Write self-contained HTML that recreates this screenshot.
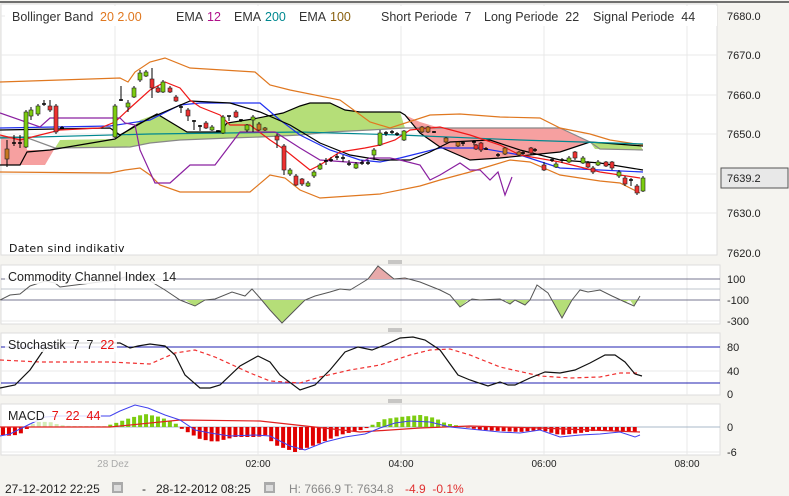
<!DOCTYPE html>
<html><head><meta charset="utf-8"><style>
html,body{margin:0;padding:0;background:#f5f4f0;}
svg{display:block;font-family:"Liberation Sans",sans-serif;}
</style></head><body>
<svg id="s" width="789" height="496" viewBox="0 0 789 496" xmlns="http://www.w3.org/2000/svg">
<rect width="789" height="496" fill="#f5f4f0"/>
<line x1="0" y1="2" x2="789" y2="2" stroke="#444" stroke-width="1.5"/>
<rect x="1" y="4" width="716" height="251" fill="#fff" stroke="#ddd"/>
<rect x="1" y="265" width="719" height="59" fill="#fff" stroke="#ddd"/>
<rect x="1" y="333" width="719" height="62" fill="#fff" stroke="#ddd"/>
<rect x="1" y="404" width="719" height="51" fill="#fff" stroke="#ddd"/>
<g stroke="#e8e8e8" stroke-width="1">
<line x1="115" y1="4" x2="115" y2="255"/><line x1="258" y1="4" x2="258" y2="255"/><line x1="401" y1="4" x2="401" y2="255"/><line x1="544" y1="4" x2="544" y2="255"/><line x1="687" y1="4" x2="687" y2="255"/>
<line x1="1" y1="16" x2="717" y2="16"/><line x1="1" y1="55" x2="717" y2="55"/><line x1="1" y1="95" x2="717" y2="95"/><line x1="1" y1="134" x2="717" y2="134"/><line x1="1" y1="174" x2="717" y2="174"/><line x1="1" y1="213" x2="717" y2="213"/>
<line x1="115" y1="265" x2="115" y2="324"/><line x1="258" y1="265" x2="258" y2="324"/><line x1="401" y1="265" x2="401" y2="324"/><line x1="544" y1="265" x2="544" y2="324"/><line x1="687" y1="265" x2="687" y2="324"/>
<line x1="115" y1="333" x2="115" y2="395"/><line x1="258" y1="333" x2="258" y2="395"/><line x1="401" y1="333" x2="401" y2="395"/><line x1="544" y1="333" x2="544" y2="395"/><line x1="687" y1="333" x2="687" y2="395"/>
<line x1="115" y1="404" x2="115" y2="455"/><line x1="258" y1="404" x2="258" y2="455"/><line x1="401" y1="404" x2="401" y2="455"/><line x1="544" y1="404" x2="544" y2="455"/><line x1="687" y1="404" x2="687" y2="455"/>
<line x1="1" y1="371" x2="720" y2="371"/><line x1="1" y1="321" x2="720" y2="321"/><line x1="1" y1="452" x2="720" y2="452"/>
</g>
<polygon fill="#f6a0a0" points="1,137 25,137 27,150 48,150 55,148 45,165 20,165 1,165"/>
<polygon fill="#b5de78" points="55,148 130,147 150,143 180,140 230,138 260,137 300,135 330,132 370,130 405,128 400,112 360,112 345,110 330,103 310,103 300,106 283,113 253,119 227,123 220,132 187,132 157,114 140,120 133,127 115,139 60,140"/>
<polygon fill="#f6a0a0" points="405,115 420,122 440,128 560,128 575,135 590,142 560,152 500,158 470,160 440,147 420,133"/>
<polygon fill="#b5de78" points="590,142 640,145 643,150 595,149"/>
<g fill="none" stroke-width="1.2">
<polyline stroke="#888" points="0,137 25,137 55,148 130,147 150,143 180,140 230,138 260,137 300,135 330,132 370,130 405,128 440,128 560,128 590,142 600,149 643,150"/>
<polyline stroke="#000" points="0,165 20,165 27,152 50,150 115,139 133,127 157,114 187,132 220,132 227,123 253,119 283,113 300,106 310,103 330,103 345,110 360,112 400,112 405,115 420,133 440,147 470,160 500,158 560,152 590,142 643,146"/>
<polyline stroke="#e07820" points="0,82 120,78 128,82 135,72 150,62 165,58 190,68 255,72 270,85 290,90 340,100 370,122 390,128 430,115 460,114 500,117 540,118 560,128 590,134 610,140 643,145"/>
<polyline stroke="#e07820" points="0,172 110,173 125,170 140,168 150,175 160,185 180,192 250,192 270,175 285,178 300,190 320,198 350,196 380,194 420,186 440,180 470,172 490,166 510,160 530,162 560,175 600,181 620,183 640,193"/>
<polyline stroke="#008890" points="0,138 150,134 300,132 400,135 520,140 643,144"/>
<polyline stroke="#2030f0" points="0,128 110,126 150,120 180,105 200,103 260,103 280,120 300,135 330,150 360,160 380,162 400,158 440,148 480,148 520,155 560,168 600,170 643,172"/>
<polyline stroke="#000" points="0,130 110,128 120,135 150,118 190,101 230,103 260,112 290,125 320,143 350,155 380,160 410,160 430,152 450,142 490,140 520,150 560,160 600,163 643,170"/>
<polyline stroke="#f01818" points="0,135 20,140 40,135 60,130 100,128 115,122 130,108 150,90 165,82 180,88 190,100 200,107 220,115 230,125 250,125 270,140 285,150 310,170 320,165 340,152 365,148 380,145 395,140 410,130 440,127 470,135 500,145 520,155 560,162 600,172 620,175 640,178"/>
<polyline stroke="#8a20a0" points="0,113 40,127 50,118 120,118 125,123 135,125 140,150 155,183 170,183 190,165 215,165 240,132 260,132 275,132 300,148 320,160 360,163 370,158 390,158 400,160 420,165 430,180 440,175 460,163 470,170 480,170 490,180 498,172 505,195 512,177"/>
</g>
<g id="cnd"></g>
<rect x="5" y="6" width="712" height="20" fill="#fff"/>
<g font-size="12.5" fill="#333">
<text x="12" y="21">Bollinger Band</text><text x="100" y="21" fill="#e07820">20  2.00</text>
<text x="176" y="21">EMA</text><text x="207" y="21" fill="#b0108a">12</text>
<text x="234" y="21">EMA</text><text x="265" y="21" fill="#008890">200</text>
<text x="299" y="21">EMA</text><text x="330" y="21" fill="#8a6010">100</text>
<text x="381" y="21" xml:space="preserve">Short Periode  7</text>
<text x="484" y="21" xml:space="preserve">Long Periode  22</text>
<text x="593" y="21" xml:space="preserve">Signal Periode  44</text>
</g>
<rect x="5" y="240" width="78" height="14" fill="#fff"/>
<text x="9" y="252" font-size="11" fill="#111" font-family="DejaVu Sans" letter-spacing="0.3">Daten sind indikativ</text>
<g font-size="11" fill="#222">
<text x="727" y="20">7680.0</text><text x="727" y="59">7670.0</text><text x="727" y="99">7660.0</text><text x="727" y="138">7650.0</text><text x="727" y="217">7630.0</text><text x="727" y="257">7620.0</text>
<text x="727" y="283">100</text><text x="727" y="304">-100</text><text x="727" y="325">-300</text>
<text x="727" y="351">80</text><text x="727" y="375">40</text><text x="727" y="398">0</text>
<text x="727" y="431">0</text><text x="727" y="456">-6</text>
</g>
<rect x="721" y="168" width="67" height="20" fill="#e8e8e8" stroke="#555"/>
<text x="727" y="182" font-size="11" fill="#222">7639.2</text>
<g stroke="#999"><line x1="388" y1="261" x2="402" y2="261"/><line x1="388" y1="263" x2="402" y2="263"/><line x1="388" y1="329" x2="402" y2="329"/><line x1="388" y1="331" x2="402" y2="331"/><line x1="388" y1="400" x2="402" y2="400"/><line x1="388" y1="402" x2="402" y2="402"/></g>
<line x1="1" y1="279" x2="720" y2="279" stroke="#777790"/>
<line x1="1" y1="289" x2="720" y2="289" stroke="#bfc4cc"/>
<line x1="1" y1="300" x2="720" y2="300" stroke="#777790"/>
<polygon fill="#e8aaaa" points="368,279 378,266 394,279"/>
<polygon fill="#e8aaaa" points="400,279 405,278 410,279"/>
<polygon fill="#b5de78" points="185,300 195,306 205,300"/>
<polygon fill="#b5de78" points="262,300 282,323 305,300"/>
<polygon fill="#b5de78" points="455,300 460,307 468,300"/>
<polygon fill="#b5de78" points="505,300 510,304 515,300 525,305 530,300"/>
<polygon fill="#b5de78" points="552,300 562,318 572,300"/>
<polygon fill="#b5de78" points="620,300 625,302 630,300 634,306 638,300"/>
<polyline fill="none" stroke="#555" stroke-width="1" points="0,300 10,295 20,294 30,286 45,281 55,283 60,287 115,280 125,277 140,277 150,281 165,290 180,300 195,306 205,300 215,299 232,292 245,296 252,289 260,298 270,310 282,323 295,310 305,300 315,296 330,292 340,289 350,290 360,284 368,279 378,266 394,279 405,278 420,282 440,290 450,295 460,307 472,299 480,300 500,299 510,304 515,300 525,305 530,300 537,285 548,293 562,318 572,300 580,290 588,292 600,290 612,296 625,302 634,306 640,296"/>
<rect x="5" y="270" width="170" height="14" fill="#fff" opacity="0.85"/>
<text x="8" y="281" font-size="12.5" fill="#222" xml:space="preserve">Commodity Channel Index  14</text>
<line x1="1" y1="347" x2="720" y2="347" stroke="#2020b0"/>
<line x1="1" y1="383" x2="720" y2="383" stroke="#2020b0"/>
<polyline fill="none" stroke="#f03030" stroke-width="1.2" stroke-dasharray="4,3" points="0,360 40,362 110,362 150,364 175,353 195,350 215,357 250,373 270,381 300,383 320,377 350,370 380,365 410,355 430,350 450,349 470,355 500,367 540,376 570,378 600,377 620,373 640,373"/>
<polyline fill="none" stroke="#111" stroke-width="1.2" points="0,388 15,385 30,370 45,348 60,343 120,343 130,348 138,346 150,344 165,346 175,355 185,375 200,388 210,388 220,385 240,366 258,356 270,362 280,375 300,390 315,385 330,370 345,352 358,347 372,350 385,345 400,338 413,337 425,340 440,350 458,375 470,380 488,386 500,382 508,385 515,385 530,378 545,372 560,373 575,370 590,363 605,355 615,355 625,362 635,374 642,376"/>
<rect x="5" y="338" width="112" height="14" fill="#fff" opacity="0.85"/>
<text x="8" y="349" font-size="12.5" fill="#222" xml:space="preserve">Stochastik  7  7  <tspan fill="#e81010">22</tspan></text>
<line x1="1" y1="427" x2="720" y2="427" stroke="#a8b8c8"/>
<g id="mb"></g>
<polyline fill="none" stroke="#e02020" stroke-width="1.2" points="0,427 110,427 180,420 260,421 360,432 420,428 470,426 540,428 640,432"/>
<polyline fill="none" stroke="#4040ee" stroke-width="1" points="0,436 10,434 30,424 45,417 60,416 110,416 120,411 135,405 148,408 165,415 180,420 195,430 210,433 230,436 255,435 270,436 290,446 305,450 325,442 345,437 365,434 380,428 395,423 410,421 430,422 450,427 470,429 500,432 520,433 540,430 560,437 580,435 600,434 620,432 635,437 640,435"/>
<rect x="5" y="408" width="96" height="14" fill="#fff" opacity="0.8"/>
<text x="8" y="420" font-size="12.5" fill="#222" xml:space="preserve">MACD  <tspan fill="#e81010">7  22  44</tspan></text>
<g font-size="10" fill="#222" text-anchor="middle">
<text x="113" y="467" fill="#aaa">28 Dez</text><text x="258" y="467">02:00</text><text x="401" y="467">04:00</text><text x="544" y="467">06:00</text><text x="687" y="467">08:00</text>
</g>
<g font-size="12" fill="#222">
<text x="5" y="493">27-12-2012 22:25</text>
<rect x="112" y="482" width="11" height="11" fill="#aaa"/><rect x="114" y="485" width="7" height="6" fill="#ddd"/>
<text x="142" y="493">-</text>
<text x="156" y="493">28-12-2012 08:25</text>
<rect x="264" y="482" width="11" height="11" fill="#aaa"/><rect x="266" y="485" width="7" height="6" fill="#ddd"/>
<text x="289" y="493" fill="#888">H: 7666.9  T: 7634.8</text>
<text x="405" y="493" fill="#e03030" xml:space="preserve">-4.9  -0.1%</text>
</g>
</svg>
<script>
var NS="http://www.w3.org/2000/svg";
function el(p,t,a){var e=document.createElementNS(NS,t);for(var k in a)e.setAttribute(k,a[k]);p.appendChild(e);}
var c=document.getElementById("cnd");
var C=[[7,149,159,140,167,'b'],[14,143,144,135,146,'t'],[20,143,143,135,148,'t'],[26,147,112,110,148,'g'],[31,116,110,107,120,'g'],[38,114,106,104,116,'g'],[44,104,104,100,106,'t'],[50,106,110,100,112,'r'],[56,106,132,104,134,'r'],[62,128,128,126,129,'t'],[115,137,106,104,138,'g'],[121,100,100,86,101,'t'],[128,107,103,100,112,'g'],[134,97,88,86,98,'g'],[140,80,73,70,82,'g'],[146,76,72,70,77,'g'],[152,79,88,68,98,'r'],[158,88,92,86,93,'r'],[163,92,82,80,93,'g'],[170,88,92,86,93,'r'],[176,97,101,95,102,'r'],[181,107,107,104,113,'t'],[188,110,116,108,121,'r'],[194,121,121,120,130,'t'],[200,126,126,125,131,'t'],[206,123,128,121,129,'r'],[212,130,127,125,131,'g'],[218,131,131,130,132,'t'],[223,133,117,115,134,'g'],[229,116,116,116,121,'t'],[236,112,117,110,118,'r'],[241,120,120,119,122,'t'],[247,130,125,124,132,'g'],[253,120,117,115,132,'g'],[259,124,130,122,131,'b'],[265,128,130,127,131,'b'],[277,136,140,134,148,'r'],[284,146,170,144,175,'r'],[290,174,170,168,176,'g'],[296,176,185,174,186,'r'],[302,179,184,178,186,'r'],[308,186,183,181,187,'g'],[314,176,172,170,178,'g'],[320,169,165,163,170,'g'],[326,161,161,158,165,'t'],[331,160,160,157,162,'t'],[337,157,157,154,160,'t'],[343,158,158,155,162,'t'],[349,164,164,160,166,'t'],[356,168,164,162,169,'g'],[362,163,163,160,165,'t'],[368,163,163,160,165,'t'],[374,155,150,148,160,'g'],[380,145,133,130,146,'g'],[386,133,133,131,136,'t'],[392,132,132,130,134,'t'],[397,134,134,132,136,'t'],[404,140,131,130,141,'g'],[422,127,132,126,133,'b'],[428,127,132,126,133,'b'],[434,132,132,131,133,'t'],[446,138,142,137,143,'b'],[458,142,146,141,147,'b'],[463,143,143,141,146,'t'],[474,142,142,140,145,'t'],[476,145,149,144,150,'r'],[481,143,150,142,152,'r'],[486,149,149,147,150,'t'],[498,155,155,153,157,'t'],[505,148,154,147,155,'b'],[519,152,155,151,156,'b'],[523,153,153,151,155,'t'],[531,148,153,147,155,'r'],[535,150,150,148,152,'t'],[544,165,170,162,171,'r'],[552,160,160,158,162,'t'],[556,167,164,162,168,'g'],[562,160,160,158,163,'t'],[569,162,158,156,163,'g'],[575,152,158,151,160,'r'],[583,163,158,156,164,'g'],[588,163,167,161,168,'r'],[593,168,172,166,174,'r'],[598,165,162,160,166,'g'],[606,162,166,161,167,'r'],[612,162,168,161,170,'r'],[619,176,172,170,178,'g'],[625,178,184,176,186,'r'],[631,180,180,178,186,'t'],[637,186,193,184,195,'r'],[643,191,178,176,192,'g']];
C.forEach(function(d){var col=d[5]=='g'?'#7ccc10':d[5]=='r'?'#ee3030':d[5]=='b'?'#c87820':'#000';
el(c,'line',{x1:d[0],x2:d[0],y1:d[3],y2:d[4],stroke:'#000','stroke-width':1});
if(d[5]=='t'){el(c,'line',{x1:d[0]-2,x2:d[0]+2,y1:d[1],y2:d[1],stroke:'#000','stroke-width':1.5});}
else{var t=Math.min(d[1],d[2]),h=Math.max(2,Math.abs(d[1]-d[2]));el(c,'rect',{x:d[0]-2,y:t,width:4,height:h,fill:col,stroke:'#222','stroke-width':0.6});}});
var K=[[3,-8],[12,-9],[22,-6],[28,-1],[30,2],[40,6],[50,5],[60,2],[70,1],[105,1],[113,3],[130,9],[145,13],[160,10],[175,4],[182,-2],[200,-12],[215,-15],[235,-10],[258,-10],[265,-8],[275,-18],[295,-25],[315,-18],[340,-8],[365,-2],[372,2],[385,8],[400,10],[420,12],[435,9],[445,4],[460,1],[470,-1],[480,-3],[520,-5],[540,-3],[560,-8],[580,-6],[600,-3],[620,-5],[640,-5]];
function v(x){for(var i=1;i<K.length;i++){if(x<=K[i][0]){var a=K[i-1],b=K[i];return a[1]+(b[1]-a[1])*(x-a[0])/(b[0]-a[0]);}}return 0;}
var mb=document.getElementById("mb");
for(var x=3;x<=641;x+=5.96){var val=v(x);var h=Math.abs(val);if(h<0.5)continue;var light=(x>28&&x<110);
var col=val>0?(light?'#d4ecb8':'#7ccc10'):(light?'#f4c0c0':'#e00000');
el(mb,'rect',{x:x-2,y:val>0?427-h:427,width:4,height:h,fill:col});}
</script>
</body></html>
